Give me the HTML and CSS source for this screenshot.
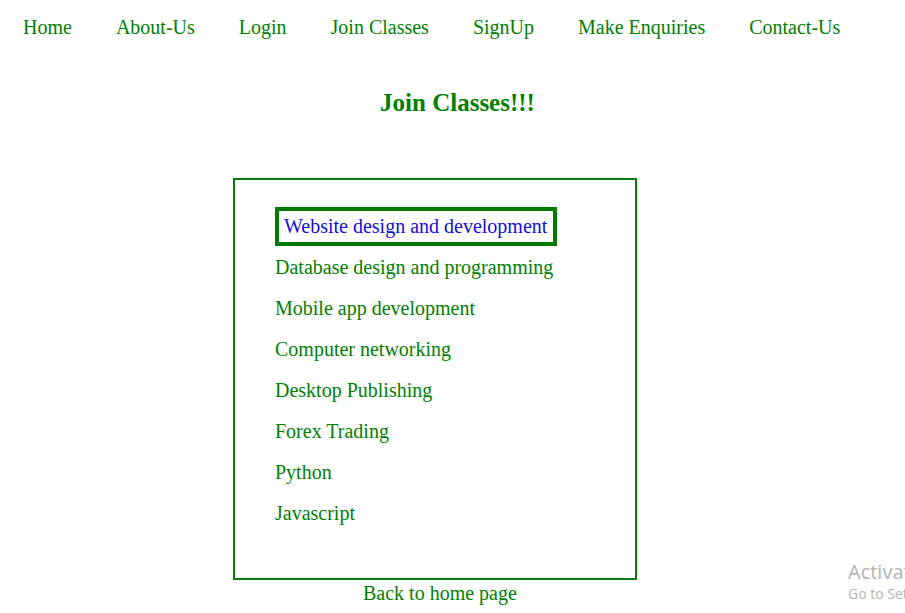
FILE: index.html
```html
<!DOCTYPE html>
<html lang="en">
<head>
<meta charset="utf-8">
<title>Join Classes</title>
<link rel="stylesheet" href="styles.css">
</head>
<body>
<nav class="nav">
  <a href="#">Home</a>
  <a href="#">About-Us</a>
  <a href="#">Login</a>
  <a href="#">Join Classes</a>
  <a href="#">SignUp</a>
  <a href="#">Make Enquiries</a>
  <a href="#">Contact-Us</a>
</nav>
<h2 class="title">Join Classes!!!</h2>
<div class="wrap">
  <ul class="classes">
    <li><a href="#" class="active">Website design and development</a></li>
    <li><a href="#">Database design and programming</a></li>
    <li><a href="#">Mobile app development</a></li>
    <li><a href="#">Computer networking</a></li>
    <li><a href="#">Desktop Publishing</a></li>
    <li><a href="#">Forex Trading</a></li>
    <li><a href="#">Python</a></li>
    <li><a href="#">Javascript</a></li>
  </ul>
  <p class="back"><a href="#">Back to home page</a></p>
</div>
<div class="watermark">
  <div class="wm-big">Activate Windows</div>
  <div class="wm-small">Go to Settings to activate Windows.</div>
</div>
</body>
</html>
```
FILE: styles.css
```css
html, body {
  margin: 0;
  padding: 0;
  background: #fff;
  overflow: hidden;
}
body {
  font-family: "Liberation Serif", "Times New Roman", serif;
  color: #008000;
  font-size: 20px;
  line-height: 23px;
  position: relative;
  height: 613px;
}
a {
  color: #008000;
  text-decoration: none;
}
.nav {
  display: flex;
  gap: 44px;
  padding: 16px 0 0 23px;
}
.title {
  margin: 50px 0 0 0;
  padding-left: 10px;
  text-align: center;
  font-size: 25px;
  line-height: 28px;
  font-weight: bold;
}
.wrap {
  margin: 61px 0 0 233px;
  width: 404px;
}
.classes {
  list-style: none;
  margin: 0;
  padding: 26px 0 44px 40px;
  border: 2px solid #0a7a0a;
  width: 360px;
}
.classes li {
  height: 41px;
  display: flex;
  align-items: center;
}
.classes a.active {
  color: #1010d8;
  border: 4px solid #007a00;
  padding: 4px 6px 4px 5px;
}
.back {
  margin: 2px 0 0 0;
  padding-left: 130px;
}
.watermark {
  position: absolute;
  left: 848px;
  right: 0;
  top: 559px;
  overflow: hidden;
  white-space: nowrap;
  color: #b4b4b4;
  font-family: "Open Sans", "Noto Sans", sans-serif;
}
.wm-big {
  font-size: 20px;
  line-height: 26px;
}
.wm-small {
  font-size: 14px;
  line-height: 18px;
}
```
